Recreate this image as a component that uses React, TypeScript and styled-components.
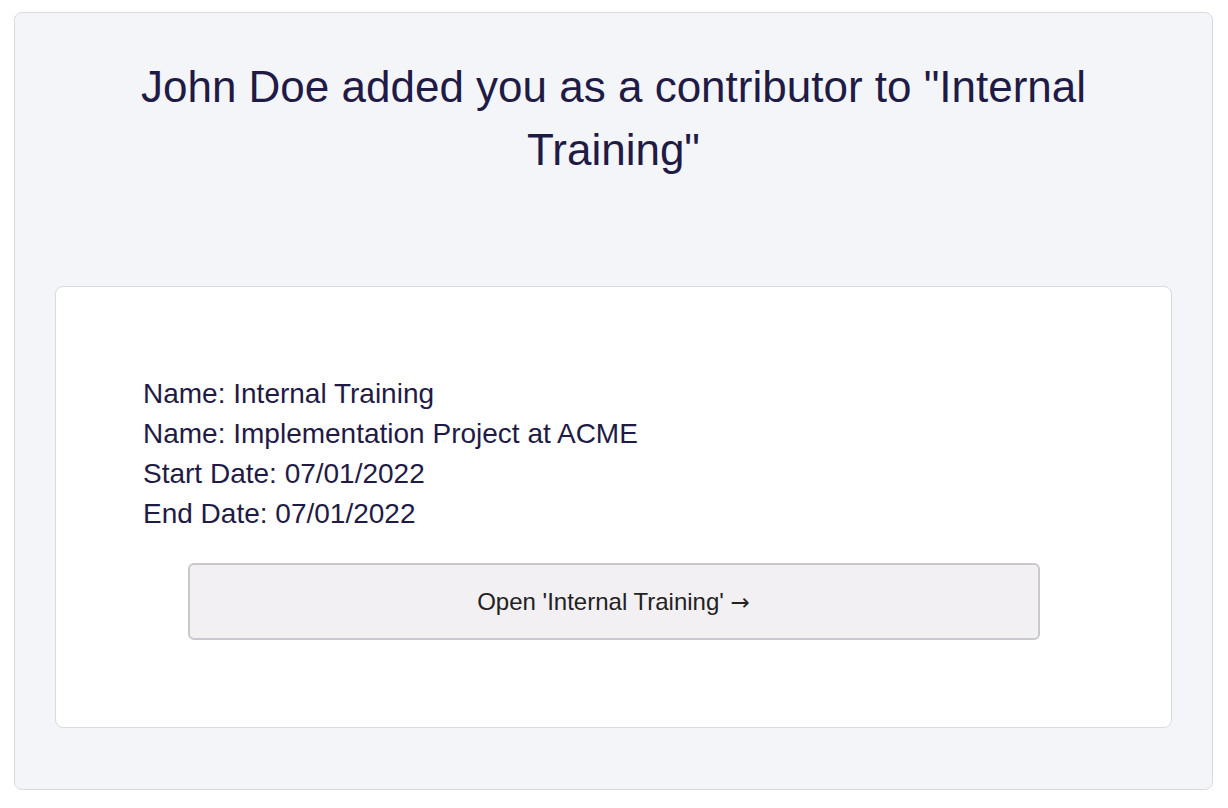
import styled, { createGlobalStyle } from "styled-components";

const GlobalStyle = createGlobalStyle`
  html, body {
    margin: 0;
    padding: 0;
    background: #ffffff;
    font-family: "Liberation Sans", Arial, Helvetica, sans-serif;
  }
`;

const Page = styled.div`
  padding: 12px 15px 18px 14px;
`;

const Panel = styled.div`
  background: #f4f5f9;
  border: 1px solid #d9dae0;
  border-radius: 8px;
  padding: 42px 40px 61px;
`;

const Title = styled.h1`
  margin: 0 0 105px;
  font-size: 44px;
  font-weight: normal;
  line-height: 63px;
  text-align: center;
  color: #1f1b45;
`;

const Card = styled.div`
  background: #ffffff;
  border: 1px solid #d9dae0;
  border-radius: 8px;
  padding: 87px 87px 87px;
`;

const Details = styled.div`
  display: flex;
  flex-direction: column;
`;

const DetailLine = styled.div`
  font-size: 28px;
  line-height: 40px;
  color: #1f1b45;
`;

const OpenButton = styled.button`
  display: block;
  width: 852px;
  height: 77px;
  margin: 29px auto 0;
  background: #f2f0f2;
  border: 2px solid #c9c8cc;
  border-radius: 6px;
  font-family: "Liberation Sans", Arial, sans-serif;
  font-size: 24px;
  color: #222222;
  cursor: pointer;
`;

const Arrow = styled.span`
  font-family: "DejaVu Sans", sans-serif;
  font-size: 23px;
`;

const project = {
  name: "Internal Training",
  client: "Implementation Project at ACME",
  start: "07/01/2022",
  end: "07/01/2022",
};

export default function App() {
  return (
    <>
      <GlobalStyle />
      <Page>
        <Panel>
          <Title>John Doe added you as a contributor to "{project.name}"</Title>
          <Card>
            <Details>
              <DetailLine>Name: {project.name}</DetailLine>
              <DetailLine>Name: {project.client}</DetailLine>
              <DetailLine>Start Date: {project.start}</DetailLine>
              <DetailLine>End Date: {project.end}</DetailLine>
            </Details>
            <OpenButton>
              Open '{project.name}' <Arrow>→</Arrow>
            </OpenButton>
          </Card>
        </Panel>
      </Page>
    </>
  );
}
